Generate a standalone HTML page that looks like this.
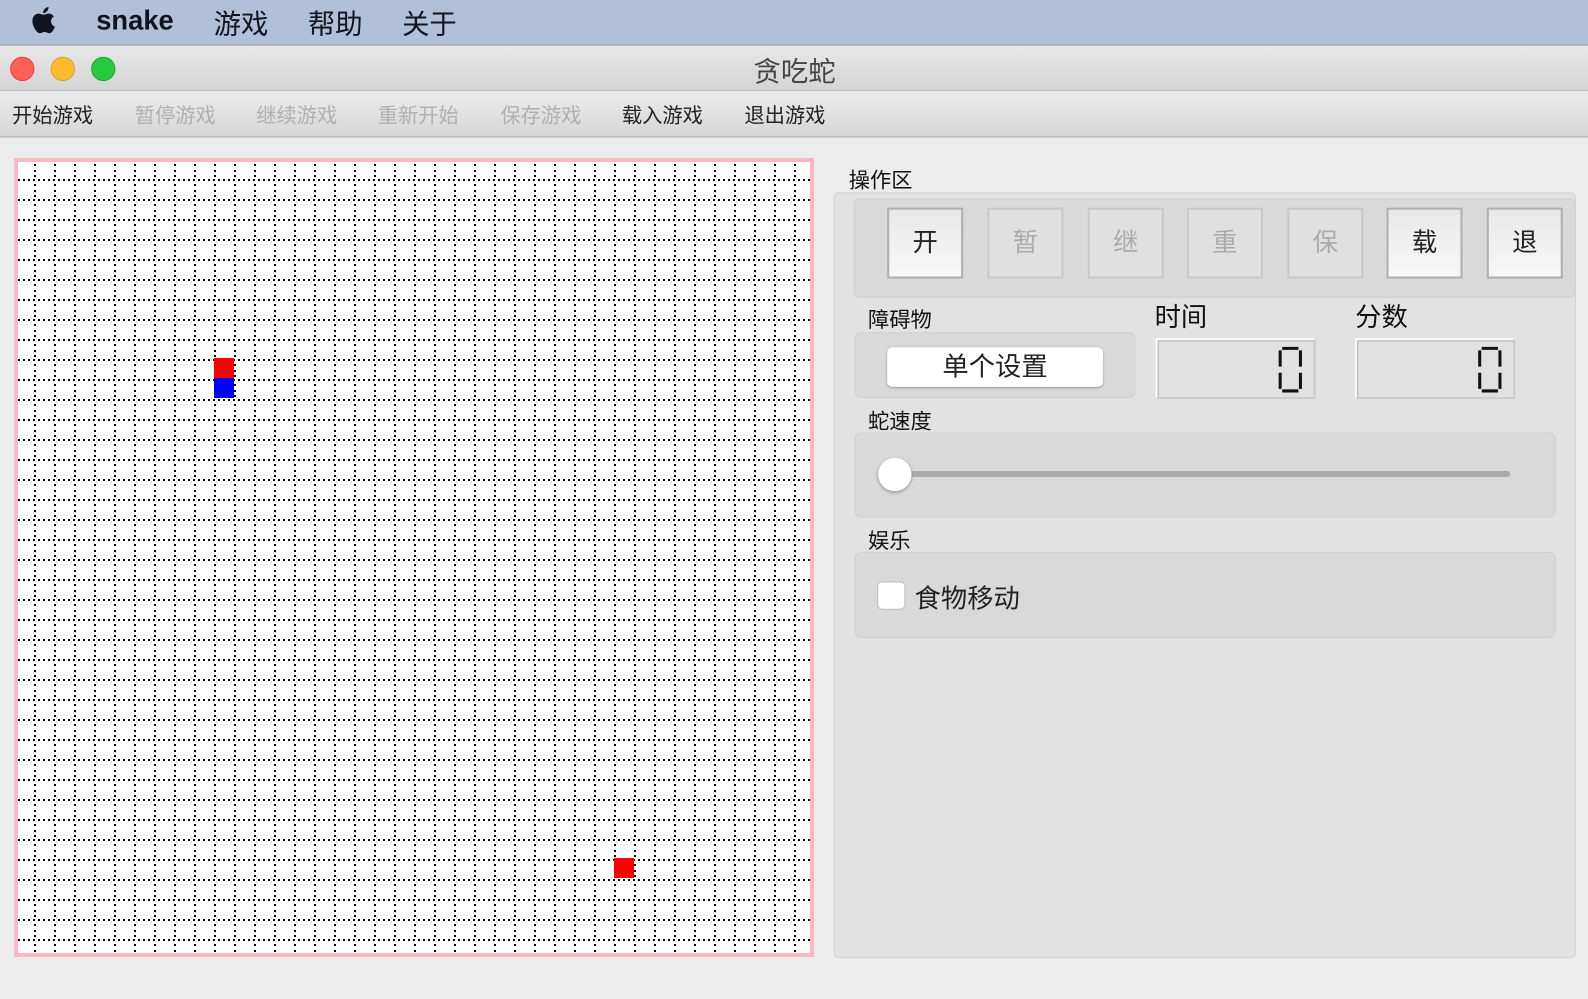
<!DOCTYPE html>
<html><head><meta charset="utf-8"><style>
*{margin:0;padding:0;box-sizing:border-box}
body{width:1588px;height:998px;overflow:hidden;background:#ececec;font-family:"Liberation Sans","Noto Sans CJK SC",sans-serif;position:relative}
#w{position:absolute;left:0;top:0;width:1568px;height:986px;transform:scale(1.0128);transform-origin:0 0}
.abs{position:absolute}
.menubar{left:0;top:0;width:1568px;height:44px;background:#b0c0d8}
.menubar span{position:absolute;top:2px;font-size:27px;color:#0f1420}
.title{left:0;top:44px;width:1568px;height:46px;background:linear-gradient(#e8e8e8,#d4d4d4);border-top:1px solid #999;border-bottom:1px solid #b8b8b8}
.dot{position:absolute;top:11px;width:24px;height:24px;border-radius:50%}
.tool{left:0;top:90px;width:1568px;height:46px;background:linear-gradient(#ececec,#d6d6d6);border-bottom:2px solid #bdbdbd}
.tool span{position:absolute;top:8px;font-size:20px;color:#222}
.tool span.d{color:#b0b0b0}
.board{left:14px;top:158px;width:800px;height:799px;border:4px solid #ffb6c1;background:#fff}
.panel{left:823px;top:190px;width:733px;height:756px;background:#e2e2e2;border:1px solid #d2d2d2;border-radius:5px}
.grp{background:#d9d9d9;border:1px solid #d0d0d0;border-radius:6px}
.lbl{font-size:21px;color:#111}
.btn{position:absolute;top:205px;width:75px;height:70px;border:2px solid #b0b0b0;background:linear-gradient(#e8e8e8,#f8f8f8);font-size:25px;text-align:center;line-height:66px;color:#222}
.btn.d{color:#aaa;border-color:#c8c8c8;background:#e0e0e0}
.lcd{width:158px;height:60px;border:2px solid;border-color:#fafafa #ccc #ccc #fafafa;box-shadow:inset 1px 1px 0 #aaa;background:#e1e1e1}
</style></head><body>
<div id="w">
<div class="abs menubar">
<svg class="abs" style="left:28px;top:5px" width="30" height="32" viewBox="0 0 30 32"><path d="M20 2c0 3-2.5 6-5.5 6C14.3 5 17 2 20 2zM15 9.5c1.8 0 3.2-1.2 5-1.2 2 0 4 1 5.2 3-4.2 2.4-3.5 8.4 1 10-1 2.8-3 6.5-5.5 6.5-2 0-2.5-1.2-4.7-1.2s-3 1.2-4.8 1.2C8.5 27.8 4 21 4 15.8 4 11 7 8.4 10 8.4c1.9 0 3.2 1.1 5 1.1z" fill="#0f1420"/></svg>
<span style="left:95px;top:5px;font-weight:bold">snake</span>
<span style="left:211px">游戏</span><span style="left:304px">帮助</span><span style="left:397px">关于</span>
</div>
<div class="abs title">
<div class="dot" style="left:10px;background:#fe5f57;border:1px solid #e0443e"></div>
<div class="dot" style="left:50px;background:#febc2e;border:1px solid #dea123"></div>
<div class="dot" style="left:90px;background:#28c840;border:1px solid #1aab29"></div>
<div class="abs" style="left:744px;top:4px;font-size:27px;color:#444">贪吃蛇</div>
</div>
<div class="abs tool">
<span style="left:12px">开始游戏</span><span class="d" style="left:133px">暂停游戏</span><span class="d" style="left:253px">继续游戏</span><span class="d" style="left:373px">重新开始</span><span class="d" style="left:494px">保存游戏</span><span style="left:614px">载入游戏</span><span style="left:735px">退出游戏</span>
</div>
<div class="abs lbl" style="left:838px;top:162px">操作区</div>
<div class="abs panel"></div>
<div class="abs grp" style="left:843px;top:196px;width:713px;height:98px"></div>
<div class="btn" style="left:876px">开</div><div class="btn d" style="left:975px">暂</div><div class="btn d" style="left:1074px">继</div><div class="btn d" style="left:1172px">重</div><div class="btn d" style="left:1271px">保</div><div class="btn" style="left:1369px">载</div><div class="btn" style="left:1468px">退</div>
<div class="abs lbl" style="left:857px;top:300px">障碍物</div>
<div class="abs lbl" style="left:1140px;top:293px;font-size:26px">时间</div>
<div class="abs lbl" style="left:1338px;top:293px;font-size:26px">分数</div>
<div class="abs grp" style="left:844px;top:328px;width:277px;height:65px"></div>
<div class="abs" style="left:876px;top:343px;width:213px;height:39px;background:#fff;border-radius:5px;box-shadow:0 1px 2px #999;text-align:center;font-size:26px;line-height:39px;color:#222">单个设置</div>
<div class="abs lcd" style="left:1141px;top:334px"></div>
<div class="abs lcd" style="left:1338px;top:334px"></div>
<svg class="abs" style="left:1262px;top:342px" width="24" height="46"><g fill="none" stroke="#111" stroke-width="3"><path d="M4 2h16M2 4v16M22 4v16M2 26v16M22 26v16M4 44h16"/></g></svg>
<svg class="abs" style="left:1459px;top:342px" width="24" height="46"><g fill="none" stroke="#111" stroke-width="3"><path d="M4 2h16M2 4v16M22 4v16M2 26v16M22 26v16M4 44h16"/></g></svg>
<div class="abs lbl" style="left:857px;top:400px">蛇速度</div>
<div class="abs grp" style="left:844px;top:427px;width:692px;height:84px"></div>
<div class="abs" style="left:883px;top:465px;width:608px;height:6px;background:#a9a9a9;border-radius:3px"></div>
<div class="abs" style="left:867px;top:452px;width:33px;height:33px;background:#fff;border-radius:50%;box-shadow:0 1px 3px #888"></div>
<div class="abs lbl" style="left:857px;top:518px">娱乐</div>
<div class="abs grp" style="left:844px;top:545px;width:692px;height:85px"></div>
<div class="abs" style="left:866px;top:574px;width:28px;height:28px;background:#fff;border:1px solid #bbb;border-radius:5px"></div>
<div class="abs" style="left:903px;top:571px;font-size:26px;color:#222">食物移动</div>
</div>
<div class="abs board">
<svg width="792" height="791" style="display:block">
<defs><pattern id="p" x="0" y="0" width="20" height="20" patternUnits="userSpaceOnUse">
<g fill="#000">
<rect x="0" y="17" width="2" height="2"/><rect x="5" y="17" width="2" height="2"/><rect x="10" y="17" width="2" height="2"/><rect x="15" y="17" width="2" height="2"/>
<rect x="16" y="2" width="2" height="2"/><rect x="16" y="8" width="2" height="2"/><rect x="16" y="13" width="2" height="2"/>
</g></pattern></defs>
<rect width="792" height="791" fill="url(#p)"/>
<rect x="196" y="196" width="20" height="20" fill="#f00"/>
<rect x="196" y="216" width="20" height="20" fill="#00f"/>
<rect x="596" y="696" width="20" height="20" fill="#f00"/>
</svg>
</div>
</body></html>
